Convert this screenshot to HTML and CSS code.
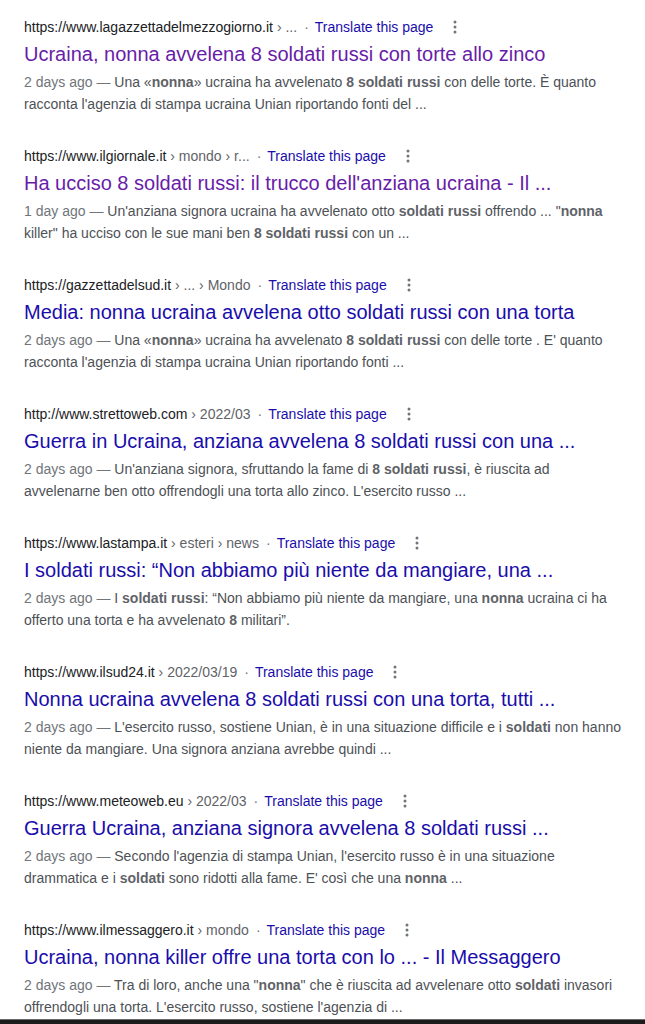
FILE: index.html
```html
<!DOCTYPE html>
<html lang="it">
<head>
  <meta charset="UTF-8" />
  <meta name="viewport" content="width=device-width, initial-scale=1.0"/>
  <title>8 soldati russi - Search results</title>
  <link rel="stylesheet" href="styles.css">
</head>
<body>
  <main class="results">

    <div class="result">
      <div class="cite">
        <span class="host">https://www.lagazzettadelmezzogiorno.it</span><span class="crumb"> › ...</span>
        <span class="sep">·</span>
        <a href="#" class="translate">Translate this page</a>
        <span class="more"><svg width="4" height="14" viewBox="0 0 4 14"><circle cx="2" cy="2" r="1.5"/><circle cx="2" cy="7" r="1.5"/><circle cx="2" cy="12" r="1.5"/></svg></span>
      </div>
      <a href="#" class="title visited">Ucraina, nonna avvelena 8 soldati russi con torte allo zinco</a>
      <div class="snippet"><span class="date">2 days ago — </span>Una «<b>nonna</b>» ucraina ha avvelenato <b>8 soldati russi</b> con delle torte. È quanto racconta l'agenzia di stampa ucraina Unian riportando fonti del ...</div>
    </div>

    <div class="result">
      <div class="cite">
        <span class="host">https://www.ilgiornale.it</span><span class="crumb"> › mondo › r...</span>
        <span class="sep">·</span>
        <a href="#" class="translate">Translate this page</a>
        <span class="more"><svg width="4" height="14" viewBox="0 0 4 14"><circle cx="2" cy="2" r="1.5"/><circle cx="2" cy="7" r="1.5"/><circle cx="2" cy="12" r="1.5"/></svg></span>
      </div>
      <a href="#" class="title visited">Ha ucciso 8 soldati russi: il trucco dell'anziana ucraina - Il ...</a>
      <div class="snippet"><span class="date">1 day ago — </span>Un'anziana signora ucraina ha avvelenato otto <b>soldati russi</b> offrendo ... "<b>nonna</b> killer" ha ucciso con le sue mani ben <b>8 soldati russi</b> con un ...</div>
    </div>

    <div class="result">
      <div class="cite">
        <span class="host">https://gazzettadelsud.it</span><span class="crumb"> › ... › Mondo</span>
        <span class="sep">·</span>
        <a href="#" class="translate">Translate this page</a>
        <span class="more"><svg width="4" height="14" viewBox="0 0 4 14"><circle cx="2" cy="2" r="1.5"/><circle cx="2" cy="7" r="1.5"/><circle cx="2" cy="12" r="1.5"/></svg></span>
      </div>
      <a href="#" class="title">Media: nonna ucraina avvelena otto soldati russi con una torta</a>
      <div class="snippet"><span class="date">2 days ago — </span>Una «<b>nonna</b>» ucraina ha avvelenato <b>8 soldati russi</b> con delle torte . E' quanto racconta l'agenzia di stampa ucraina Unian riportando fonti ...</div>
    </div>

    <div class="result">
      <div class="cite">
        <span class="host">http://www.strettoweb.com</span><span class="crumb"> › 2022/03</span>
        <span class="sep">·</span>
        <a href="#" class="translate">Translate this page</a>
        <span class="more"><svg width="4" height="14" viewBox="0 0 4 14"><circle cx="2" cy="2" r="1.5"/><circle cx="2" cy="7" r="1.5"/><circle cx="2" cy="12" r="1.5"/></svg></span>
      </div>
      <a href="#" class="title">Guerra in Ucraina, anziana avvelena 8 soldati russi con una ...</a>
      <div class="snippet"><span class="date">2 days ago — </span>Un'anziana signora, sfruttando la fame di <b>8 soldati russi</b>, è riuscita ad avvelenarne ben otto offrendogli una torta allo zinco. L'esercito russo ...</div>
    </div>

    <div class="result">
      <div class="cite">
        <span class="host">https://www.lastampa.it</span><span class="crumb"> › esteri › news</span>
        <span class="sep">·</span>
        <a href="#" class="translate">Translate this page</a>
        <span class="more"><svg width="4" height="14" viewBox="0 0 4 14"><circle cx="2" cy="2" r="1.5"/><circle cx="2" cy="7" r="1.5"/><circle cx="2" cy="12" r="1.5"/></svg></span>
      </div>
      <a href="#" class="title">I soldati russi: “Non abbiamo più niente da mangiare, una ...</a>
      <div class="snippet"><span class="date">2 days ago — </span>I <b>soldati russi</b>: “Non abbiamo più niente da mangiare, una <b>nonna</b> ucraina ci ha offerto una torta e ha avvelenato <b>8</b> militari”.</div>
    </div>

    <div class="result">
      <div class="cite">
        <span class="host">https://www.ilsud24.it</span><span class="crumb"> › 2022/03/19</span>
        <span class="sep">·</span>
        <a href="#" class="translate">Translate this page</a>
        <span class="more"><svg width="4" height="14" viewBox="0 0 4 14"><circle cx="2" cy="2" r="1.5"/><circle cx="2" cy="7" r="1.5"/><circle cx="2" cy="12" r="1.5"/></svg></span>
      </div>
      <a href="#" class="title">Nonna ucraina avvelena 8 soldati russi con una torta, tutti ...</a>
      <div class="snippet"><span class="date">2 days ago — </span>L'esercito russo, sostiene Unian, è in una situazione difficile e i <b>soldati</b> non hanno niente da mangiare. Una signora anziana avrebbe quindi ...</div>
    </div>

    <div class="result">
      <div class="cite">
        <span class="host">https://www.meteoweb.eu</span><span class="crumb"> › 2022/03</span>
        <span class="sep">·</span>
        <a href="#" class="translate">Translate this page</a>
        <span class="more"><svg width="4" height="14" viewBox="0 0 4 14"><circle cx="2" cy="2" r="1.5"/><circle cx="2" cy="7" r="1.5"/><circle cx="2" cy="12" r="1.5"/></svg></span>
      </div>
      <a href="#" class="title">Guerra Ucraina, anziana signora avvelena 8 soldati russi ...</a>
      <div class="snippet"><span class="date">2 days ago — </span>Secondo l'agenzia di stampa Unian, l'esercito russo è in una situazione drammatica e i <b>soldati</b> sono ridotti alla fame. E' così che una <b>nonna</b> ...</div>
    </div>

    <div class="result">
      <div class="cite">
        <span class="host">https://www.ilmessaggero.it</span><span class="crumb"> › mondo</span>
        <span class="sep">·</span>
        <a href="#" class="translate">Translate this page</a>
        <span class="more"><svg width="4" height="14" viewBox="0 0 4 14"><circle cx="2" cy="2" r="1.5"/><circle cx="2" cy="7" r="1.5"/><circle cx="2" cy="12" r="1.5"/></svg></span>
      </div>
      <a href="#" class="title">Ucraina, nonna killer offre una torta con lo ... - Il Messaggero</a>
      <div class="snippet"><span class="date">2 days ago — </span>Tra di loro, anche una "<b>nonna</b>" che è riuscita ad avvelenare otto <b>soldati</b> invasori offrendogli una torta. L'esercito russo, sostiene l'agenzia di ...</div>
    </div>

  </main>
  <div class="taskbar"></div>
</body>
</html>
```

FILE: styles.css
```css
body {
  font-family: "Liberation Sans", Arial, sans-serif;
  margin: 0;
  padding: 0;
  background-color: #fff;
  color: #202124;
  height: 1024px;
  overflow: hidden;
  position: relative;
}

.results {
  padding: 16px 0 0 24px;
  width: 604px;
}

.result {
  margin-bottom: 30px;
}

.cite {
  font-size: 14px;
  line-height: 22px;
  height: 22px;
  white-space: nowrap;
  display: flex;
  align-items: center;
}

.host {
  color: #202124;
}

.crumb {
  color: #5f6368;
  white-space: pre;
}

.sep {
  color: #70757a;
  margin: 0 6px 0 7px;
}

.translate {
  color: #1a0dab;
  text-decoration: none;
}

.more {
  display: inline-flex;
  margin-left: 20px;
  fill: #70757a;
}

.title {
  display: block;
  margin-top: 3px;
  font-size: 20px;
  line-height: 26px;
  color: #1a0dab;
  text-decoration: none;
  white-space: nowrap;
}

.title.visited {
  color: #681da8;
}

.snippet {
  margin-top: 4px;
  font-size: 14px;
  line-height: 22px;
  color: #4d5156;
}

.snippet b {
  color: #5f6368;
}

.date {
  color: #70757a;
}

.taskbar {
  position: absolute;
  left: 0;
  right: 0;
  bottom: 0;
  height: 4px;
  background: #1c1c1c;
  border-top: 1px solid #6b6b6b;
}
```
